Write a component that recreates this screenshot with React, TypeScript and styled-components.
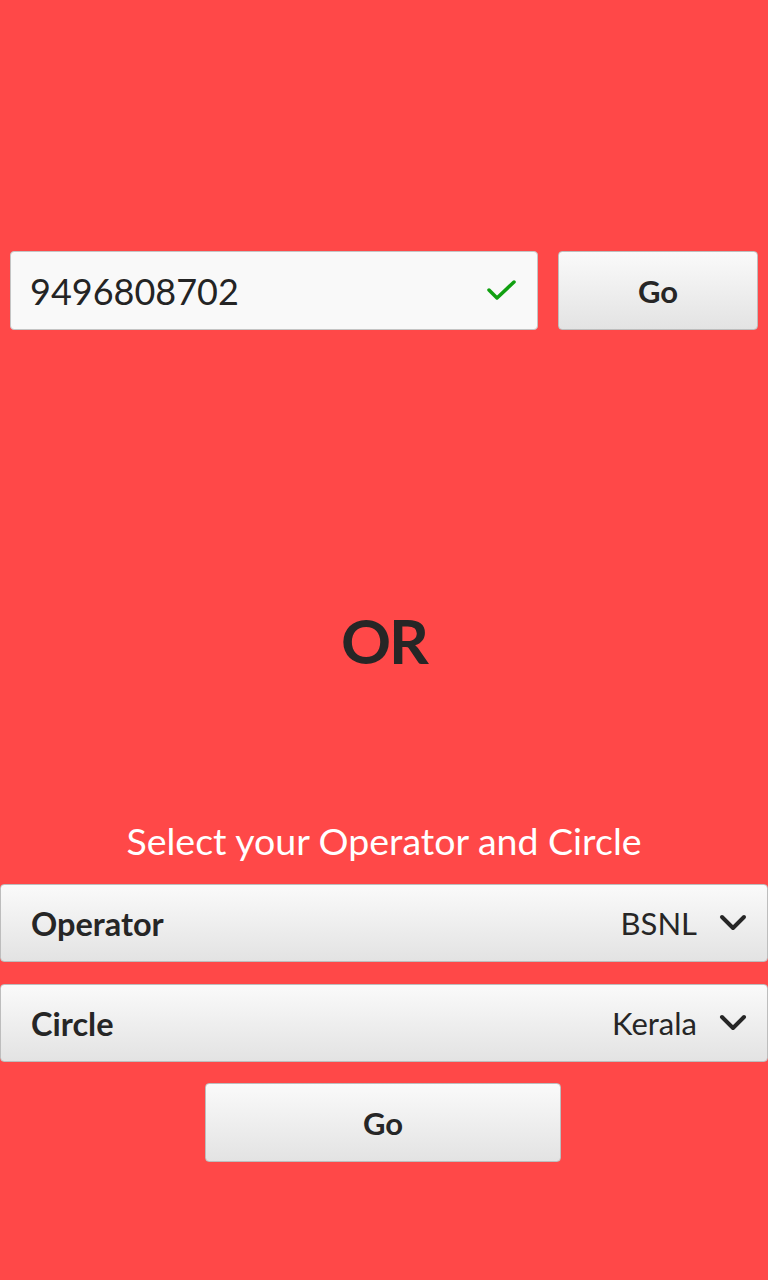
import React from "react";
import styled, { createGlobalStyle } from "styled-components";

const Global = createGlobalStyle`
  html, body { margin: 0; padding: 0; background: #ff4848; }
  body { font-family: Lato, "Open Sans", sans-serif; }
`;

const Page = styled.div`
  width: 768px;
  min-height: 1280px;
  background: #ff4848;
  display: flex;
  flex-direction: column;
  box-sizing: border-box;
  padding-top: 251px;
`;

const TopRow = styled.div`
  display: flex;
  gap: 20px;
  padding: 0 10px;
`;

const InputBox = styled.div`
  flex: 0 0 528px;
  height: 79px;
  box-sizing: border-box;
  background: #f9f9f9;
  border: 1.5px solid #c4c4c4;
  border-radius: 4px;
  display: flex;
  align-items: center;
  justify-content: space-between;
  padding: 0 20px 0 19px;
  font-size: 36px;
  color: #242424;
`;

const Button = styled.button<{ $w: number }>`
  width: ${(p) => p.$w}px;
  height: 79px;
  box-sizing: border-box;
  border: 1.5px solid #bdbdbd;
  border-radius: 4px;
  background: linear-gradient(#fafafa, #e3e3e3);
  font-family: Lato, "Open Sans", sans-serif;
  font-weight: 700;
  font-size: 31px;
  color: #262626;
  padding: 0;
`;

const OrText = styled.div`
  margin-top: 270px;
  text-align: center;
  font-size: 62px;
  font-weight: 700;
  color: #262626;
  line-height: 80px;
  letter-spacing: -2px;
`;

const Caption = styled.div`
  margin-top: 139px;
  text-align: center;
  font-size: 37.5px;
  color: #ffffff;
  line-height: 44px;
`;

const Dropdown = styled.div<{ $mt: number }>`
  margin-top: ${(p) => p.$mt}px;
  height: 78px;
  box-sizing: border-box;
  border: 1.5px solid #bdbdbd;
  border-radius: 4px;
  background: linear-gradient(#fafafa, #e3e3e3);
  display: flex;
  align-items: center;
  padding: 0 20px 0 30px;
  color: #262626;
  font-size: 31px;
`;

const Label = styled.span`
  font-weight: 700;
  font-size: 32.5px;
  flex: 1;
`;

const Value = styled.span`
  font-weight: 400;
  margin-right: 22px;
`;

const Center = styled.div`
  display: flex;
  justify-content: center;
  margin-top: 21px;
  padding-right: 2px;
`;

const Chevron = () => (
  <svg width="28" height="18" viewBox="0 0 28 18">
    <path d="M3 3 L14 14 L25 3" fill="none" stroke="#262626" strokeWidth="4" strokeLinecap="round" strokeLinejoin="round" />
  </svg>
);

const Check = () => (
  <svg width="30" height="24" viewBox="0 0 30 24">
    <path d="M2 11 L10 19 L27 3" fill="none" stroke="#11a011" strokeWidth="3.5" strokeLinecap="round" strokeLinejoin="round" />
  </svg>
);

export default function App() {
  return (
    <>
      <Global />
      <Page>
        <TopRow>
          <InputBox>
            <span>9496808702</span>
            <Check />
          </InputBox>
          <Button $w={200}>Go</Button>
        </TopRow>
        <OrText>OR</OrText>
        <Caption>Select your Operator and Circle</Caption>
        <Dropdown $mt={21}>
          <Label>Operator</Label>
          <Value>BSNL</Value>
          <Chevron />
        </Dropdown>
        <Dropdown $mt={22}>
          <Label>Circle</Label>
          <Value>Kerala</Value>
          <Chevron />
        </Dropdown>
        <Center>
          <Button $w={356}>Go</Button>
        </Center>
      </Page>
    </>
  );
}
